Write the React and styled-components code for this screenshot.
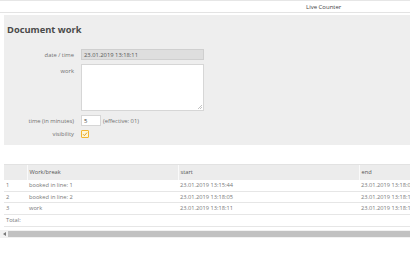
import React from "react";
import styled, { createGlobalStyle } from "styled-components";

const Global = createGlobalStyle`
  html, body { margin: 0; padding: 0; background: #fff; }
  body { font-family: "Open Sans", "Liberation Sans", sans-serif; color: #555; overflow: hidden; }
  * { box-sizing: border-box; }
`;

const Page = styled.div`
  width: 410px;
  height: 257px;
  overflow: hidden;
`;

const TopBar = styled.div`
  height: 13px;
  border-top: 1px solid #e6e6e6;
  border-bottom: 1px solid #e3e3e3;
  display: flex;
  align-items: center;
  padding-left: 306px;
  font-size: 6px;
  color: #444;
`;

const Panel = styled.section`
  margin: 2px 0 0 4px;
  background: #eeeeee;
  height: 130px;
  padding: 8px 0 0 3px;
`;

const Title = styled.h2`
  margin: 0;
  font-size: 9.3px;
  font-weight: 700;
  color: #4a4a4a;
  line-height: 13px;
`;

const Form = styled.div`
  margin-top: 13px;
  display: grid;
  grid-template-columns: 67px 123px;
  column-gap: 7px;
  row-gap: 4px;
  align-items: center;
`;

const Label = styled.label`
  font-size: 5.8px;
  color: #707070;
  text-align: right;
  align-self: ${(p) => (p.$top ? "start" : "center")};
  padding-top: ${(p) => (p.$top ? "3px" : "0")};
`;

const ReadOnly = styled.div`
  height: 11px;
  background: #dedede;
  border: 1px solid #cfcfcf;
  font-size: 5.8px;
  color: #555;
  display: flex;
  align-items: center;
  padding-left: 2px;
`;

const TextArea = styled.div`
  height: 47px;
  background: #fff;
  border: 1px solid #d6d6d6;
  position: relative;
`;

const Grip = styled.svg`
  position: absolute;
  right: 1px;
  bottom: 1px;
`;

const Inline = styled.div`
  display: flex;
  align-items: center;
  gap: 2px;
  font-size: 5.8px;
  color: #707070;
`;

const SmallInput = styled.div`
  width: 20px;
  height: 11px;
  background: #fff;
  border: 1px solid #d6d6d6;
  font-size: 5.8px;
  color: #444;
  display: flex;
  align-items: center;
  padding-left: 2px;
`;

const Check = styled.div`
  width: 8px;
  height: 8px;
  border: 1px solid #f2b632;
  background: #fff6d6;
  border-radius: 1px;
  display: flex;
  align-items: center;
  justify-content: center;
`;

const TableWrap = styled.div`
  margin: 19px 0 0 4px;
`;

const Table = styled.table`
  border-collapse: collapse;
  width: 420px;
  table-layout: fixed;
  font-size: 5.7px;
  color: #777;
`;

const Th = styled.th`
  background: #ececec;
  height: 15px;
  text-align: left;
  font-weight: 400;
  color: #555;
  padding: 0 0 0 2px;
  border-top: 1px solid #e2e2e2;
  border-left: ${(p) => (p.$first ? "none" : "1px solid #fafafa")};
`;

const Td = styled.td`
  height: ${(p) => (p.$h ? p.$h : "11.5px")};
  padding: 0 0 0 2px;
  border-bottom: 1px solid #e6e6e6;
  background: #fff;
  white-space: nowrap;
  overflow: hidden;
`;

const Scroll = styled.div`
  margin-top: 3px;
  height: 8px;
  display: flex;
  align-items: center;
  background: #f1f1f1;
`;

const Arrow = styled.div`
  width: 8px;
  display: flex;
  justify-content: center;
  align-items: center;
`;

const Thumb = styled.div`
  flex: 1;
  height: 6px;
  background: #c1c1c1;
`;

const rows = [
  ["1", "booked in line: 1", "23.01.2019 13:15:44", "23.01.2019 13:18:05"],
  ["2", "booked in line: 2", "23.01.2019 13:18:05", "23.01.2019 13:18:11"],
  ["3", "work", "23.01.2019 13:18:11", "23.01.2019 13:18:13"],
];

export default function App() {
  return (
    <Page>
      <Global />
      <TopBar>Live Counter</TopBar>
      <Panel>
        <Title>Document work</Title>
        <Form>
          <Label>date / time</Label>
          <ReadOnly>23.01.2019 13:18:11</ReadOnly>
          <Label $top>work</Label>
          <TextArea>
            <Grip width="4" height="4" viewBox="0 0 4 4">
              <path d="M4 0 L0 4 M4 2 L2 4" stroke="#aaa" strokeWidth="0.7" />
            </Grip>
          </TextArea>
          <Label>time (in minutes)</Label>
          <Inline>
            <SmallInput>5</SmallInput>
            <span>(effective: 01)</span>
          </Inline>
          <Label>visibility</Label>
          <Inline>
            <Check>
              <svg width="6" height="6" viewBox="0 0 6 6">
                <path d="M1 3.2 L2.4 4.6 L5 1.6" stroke="#e0a020" strokeWidth="1" fill="none" />
              </svg>
            </Check>
          </Inline>
        </Form>
      </Panel>
      <TableWrap>
        <Table>
          <colgroup>
            <col style={{ width: "23px" }} />
            <col style={{ width: "151px" }} />
            <col style={{ width: "181px" }} />
            <col style={{ width: "65px" }} />
          </colgroup>
          <thead>
            <tr>
              <Th $first></Th>
              <Th>Work/break</Th>
              <Th>start</Th>
              <Th>end</Th>
            </tr>
          </thead>
          <tbody>
            {rows.map((r) => (
              <tr key={r[0]}>
                {r.map((c, i) => (
                  <Td key={i}>{c}</Td>
                ))}
              </tr>
            ))}
            <tr>
              <Td $h="12px">Total:</Td>
              <Td $h="12px"></Td>
              <Td $h="12px"></Td>
              <Td $h="12px"></Td>
            </tr>
          </tbody>
        </Table>
      </TableWrap>
      <Scroll>
        <Arrow>
          <svg width="3" height="4" viewBox="0 0 3 4">
            <path d="M3 0 L0 2 L3 4 Z" fill="#777" />
          </svg>
        </Arrow>
        <Thumb />
      </Scroll>
    </Page>
  );
}
